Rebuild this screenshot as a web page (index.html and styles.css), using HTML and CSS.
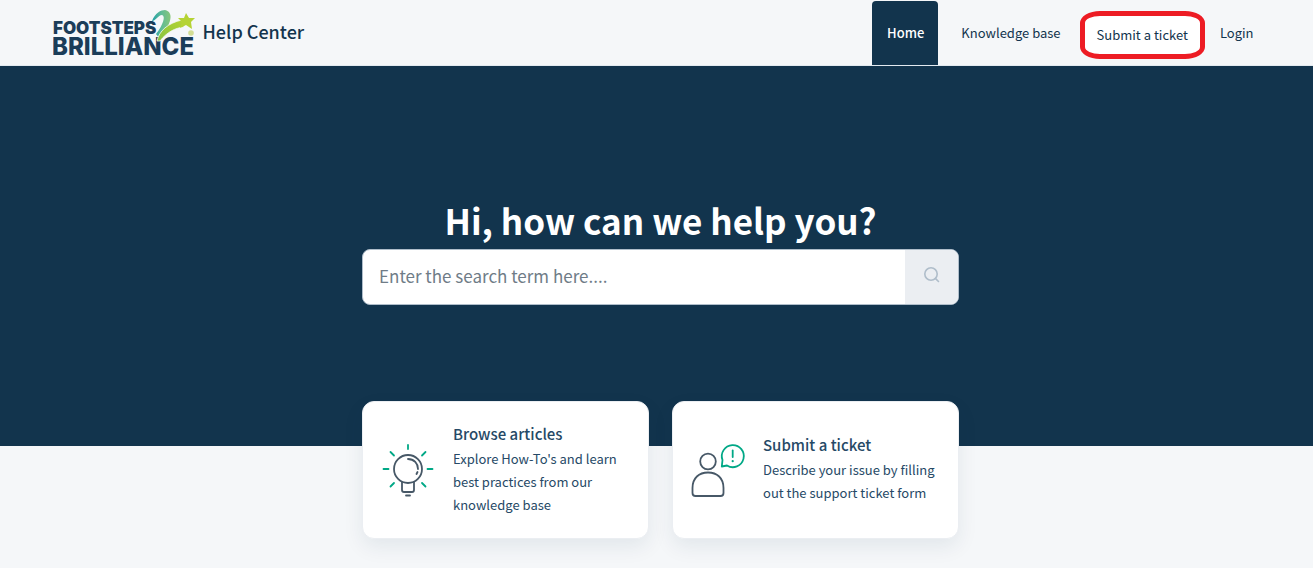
FILE: index.html
```html
<!DOCTYPE html>
<html lang="en">
<head>
    <meta charset="UTF-8">
    <meta name="viewport" content="width=device-width, initial-scale=1.0">
    <title>Footsteps2Brilliance Help Center</title>
    <link rel="stylesheet" href="styles.css">
</head>
<body>

<header class="header">
    <div class="header-inner">
        <a class="brand" href="#">
            <svg class="logo" width="142" height="54" viewBox="0 0 142 54" role="img" aria-label="Footsteps 2 Brilliance">
                <defs>
                    <linearGradient id="swoosh" x1="0" y1="0" x2="1" y2="0">
                        <stop offset="0" stop-color="#1f9fa8"/>
                        <stop offset="0.5" stop-color="#5fbb96"/>
                        <stop offset="1" stop-color="#86c67a"/>
                    </linearGradient>
                    <linearGradient id="tail" x1="0" y1="1" x2="1" y2="0">
                        <stop offset="0" stop-color="#86c440"/>
                        <stop offset="1" stop-color="#b5d334"/>
                    </linearGradient>
                </defs>
                <text class="logo-top" x="0" y="28">FOOTSTEPS</text>
                <text class="logo-bottom" x="-1" y="49">BRILLIANCE</text>
                <path d="M99 15C102 7 108 4 112 4C121 6 119 17 107 33L103 28C110 19 113 10 109 9C105 9 103 15 99 15Z" fill="url(#swoosh)"/>
                <path d="M104 35C106 25 115 17 129 14L131 21C122 22 114 26 107 35Z" fill="url(#tail)" stroke="#f5f7f9" stroke-width="0.8"/>
                <path d="M133 7L136 12L142 12L138 16L139 23L133 19L127 22L129 16L125 12L131 12Z" fill="#b5d334"/>
                <circle cx="138" cy="27" r="2.8" fill="#d3dd94"/>
            </svg>
            <span class="brand-name">Help Center</span>
        </a>
        <nav class="nav">
            <a class="nav-link active" href="#">Home</a>
            <a class="nav-link" href="#">Knowledge base</a>
            <a class="nav-link marked" href="#">Submit a ticket</a>
            <a class="nav-link" href="#">Login</a>
        </nav>
    </div>
</header>

<main>
    <section class="hero">
        <h1>Hi, how can we help you?</h1>
        <form class="search">
            <input type="text" placeholder="Enter the search term here...." aria-label="Search">
            <button type="button" aria-label="Search">
                <svg width="18" height="18" viewBox="0 0 18 18" fill="none" stroke="#afbdca" stroke-width="1.6" stroke-linecap="round">
                    <circle cx="8" cy="8" r="6.2"/>
                    <path d="M12.6 12.6L15.5 15.5"/>
                </svg>
            </button>
        </form>
    </section>

    <section class="cards">
        <a class="card" href="#">
            <svg class="card-icon" width="60" height="60" viewBox="0 0 60 60" fill="none" stroke-width="1.8" stroke-linecap="round" stroke-linejoin="round">
                <g stroke="#475867">
                    <circle cx="30" cy="29" r="14"/>
                    <path d="M24 42V50Q24 52 26 52H34Q36 52 36 50V42"/>
                    <path d="M28 55.5H32"/>
                    <path d="M30 19C36 19 40 23.5 40 29"/>
                    <path d="M39.5 32L38.5 34"/>
                </g>
                <g stroke="#00a886">
                    <path d="M30 5V9M12.5 12L16 15.5M47.5 12L44 15.5M5.5 29H10.5M49.5 29H54.5M12.5 46.5L16 43M47.5 46.5L44 43"/>
                </g>
            </svg>
            <div class="card-text">
                <h2>Browse articles</h2>
                <p>Explore How-To's and learn best practices from our knowledge base</p>
            </div>
        </a>
        <a class="card" href="#">
            <svg class="card-icon" width="60" height="60" viewBox="0 0 60 60" fill="none" stroke-width="1.8" stroke-linecap="round" stroke-linejoin="round">
                <g stroke="#475867">
                    <circle cx="20" cy="21.5" r="7.8"/>
                    <path d="M4.5 48C4.5 38 11 32.5 20 32.5S35.5 38 35.5 48V53Q35.5 56 32.5 56H7.5Q4.5 56 4.5 53Z"/>
                </g>
                <g stroke="#00a886">
                    <path d="M34.5 20A11 11 0 1 1 39 25.5L33.8 26.5Z"/>
                    <path d="M44.7 10.5V17"/>
                    <path d="M44.7 21V21.2" stroke-width="2.2"/>
                </g>
            </svg>
            <div class="card-text">
                <h2>Submit a ticket</h2>
                <p>Describe your issue by filling out the support ticket form</p>
            </div>
        </a>
    </section>
</main>

</body>
</html>
```
FILE: styles.css
```css
* {
    box-sizing: border-box;
}

body {
    margin: 0;
    font-family: "Noto Sans CJK SC", "Noto Sans", sans-serif;
    font-size: 13px;
    color: #264966;
    background-color: #f5f7f9;
}

a {
    color: inherit;
    text-decoration: none;
}

/* Header */
.header {
    padding-left: 8px;
    border-bottom: 1px solid #e3eaf0;
}

.header-inner {
    display: flex;
    justify-content: space-between;
    max-width: 1216px;
    height: 65px;
    margin: 0 auto;
}

.brand {
    display: flex;
    align-items: center;
    gap: 8px;
    color: #12344d;
}

.logo text {
    font-family: Inter, sans-serif;
    fill: #1b3d59;
}

.logo-top {
    font-size: 17px;
    font-weight: 900;
}

.logo-bottom {
    font-size: 24px;
    font-weight: 800;
}

.brand-name {
    padding-bottom: 4px;
    font-size: 18px;
    font-weight: 500;
}

.nav {
    display: flex;
    align-items: center;
    gap: 8px;
    padding-top: 1px;
}

.nav-link {
    padding: 0 15px;
    line-height: 64px;
    color: #12344d;
}

.nav-link.active {
    padding-right: 14px;
    color: #fff;
    font-weight: 500;
    background-color: #12344d;
    border-radius: 4px 4px 0 0;
}

.nav-link.marked {
    padding: 0 12px;
    margin: 3px -8px 0 -4px;
    line-height: 38px;
    background-color: #fff;
    border: 5px solid #ed1c24;
    border-radius: 20px / 12px;
}

/* Hero and search */
.hero {
    display: flex;
    flex-direction: column;
    align-items: center;
    height: 380px;
    padding: 128px 0 0 8px;
    background-color: #12344d;
}

.hero h1 {
    margin: 0 0 3px;
    font-size: 35px;
    line-height: 52px;
    color: #fff;
}

.search {
    display: flex;
    width: 100%;
    max-width: 597px;
    height: 56px;
    overflow: hidden;
    background-color: #fff;
    border: 1px solid #afbdca;
    border-radius: 8px;
}

.search input {
    flex: 1;
    min-width: 0;
    padding: 0 16px 4px;
    font: inherit;
    font-size: 17px;
    color: #12344d;
    background: none;
    border: none;
    outline: none;
}

.search input::placeholder {
    color: #6f7c87;
}

.search button {
    width: 53px;
    padding: 0 0 2px;
    background-color: #ebeef2;
    border: none;
    cursor: pointer;
}

/* Cards */
.cards {
    display: grid;
    grid-template-columns: 1fr 1fr;
    gap: 23px;
    max-width: 605px;
    margin: -45px auto 0;
    padding: 0 0 28px 8px;
}

.card {
    display: flex;
    align-items: center;
    gap: 15px;
    min-height: 138px;
    padding: 16px 15px;
    background-color: #fff;
    border: 1px solid #ebeef2;
    border-radius: 12px;
    box-shadow: 0 8px 20px rgba(18, 52, 77, 0.08);
}

.card-icon {
    flex: none;
}

.card-text {
    padding-bottom: 4px;
}

.card h2 {
    margin: 0;
    font-size: 15px;
    font-weight: 500;
    line-height: 26px;
}

.card p {
    margin: 0;
    line-height: 23px;
}
```
